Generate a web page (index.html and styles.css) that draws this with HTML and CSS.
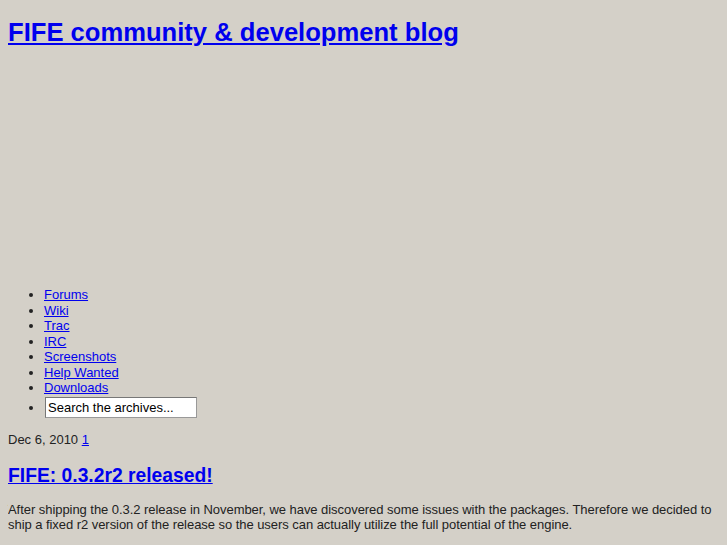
FILE: index.html
```html
<!DOCTYPE html>
<html>
<head>
<meta charset="utf-8">
<title>FIFE community &amp; development blog</title>
<link rel="stylesheet" href="styles.css">
</head>
<body>
<div class="header">
  <h1 class="site-title"><a href="#">FIFE community &amp; development blog</a></h1>
  <div class="banner"></div>
</div>
<ul class="nav">
  <li><a href="#">Forums</a></li>
  <li><a href="#">Wiki</a></li>
  <li><a href="#">Trac</a></li>
  <li><a href="#">IRC</a></li>
  <li><a href="#">Screenshots</a></li>
  <li><a href="#">Help Wanted</a></li>
  <li><a href="#">Downloads</a></li>
  <li class="search-item"><input class="search" type="text" value="Search the archives..."></li>
</ul>
<div class="post">
  <p class="date">Dec 6, 2010 <a href="#">1</a></p>
  <h2 class="post-title"><a href="#">FIFE: 0.3.2r2 released!</a></h2>
  <p class="excerpt">After shipping the 0.3.2 release in November, we have discovered some issues with the packages. Therefore we decided to ship a fixed r2 version of the release so the users can actually utilize the full potential of the engine.</p>
</div>
</body>
</html>
```

FILE: styles.css
```css
html {
  background: #d4d0c8;
}
body {
  margin: 8px;
  font-family: "Liberation Sans", Arial, sans-serif;
  font-size: 13px;
  color: #222;
  background: #d4d0c8;
}
a {
  color: #0000ee;
}
.site-title {
  font-size: 25.6px;
  font-weight: bold;
  margin: 10px 0 0 0;
  line-height: 28px;
}
.banner {
  height: 241px;
}
.nav {
  margin: 0;
  padding-left: 36px;
  line-height: 15.5px;
}
.search-item {
  margin-top: 1px;
}
.search {
  font-family: "Liberation Sans", Arial, sans-serif;
  font-size: 13px;
  width: 146px;
  height: 17px;
  margin-left: 1px;
  padding: 1px 2px;
  border: 1px solid #999;
  border-top-color: #777;
  border-left-color: #777;
  background: #fff;
  color: #000;
  box-sizing: content-box;
}
.post {
  margin-top: 14px;
}
.date {
  margin: 0;
  line-height: 15px;
}
.post-title {
  font-size: 19.3px;
  font-weight: bold;
  margin: 18px 0 0 0;
  line-height: 22px;
}
.excerpt {
  margin: 15px 0 0 0;
  line-height: 15.5px;
  letter-spacing: -0.05px;
}
```
